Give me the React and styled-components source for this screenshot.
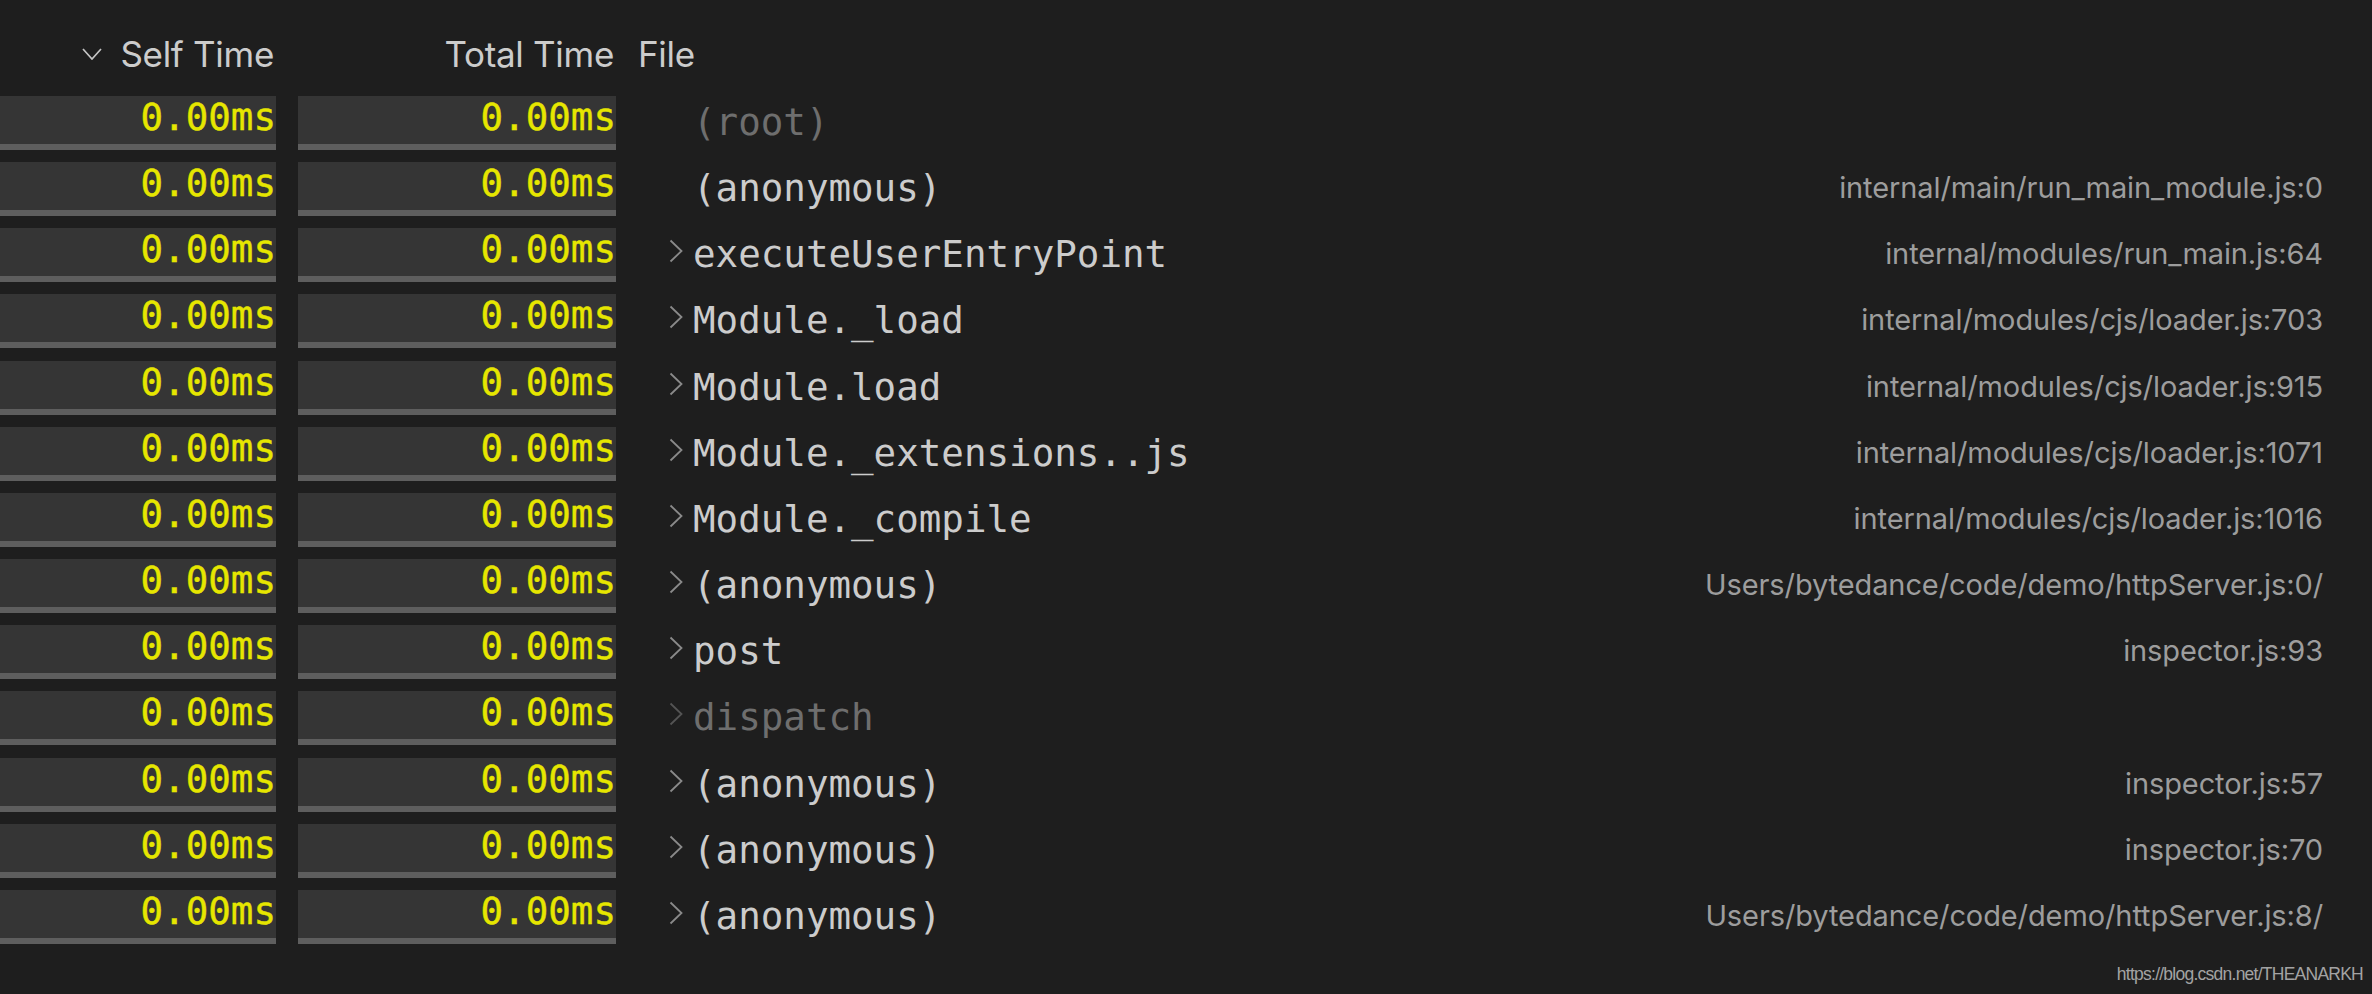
import React from "react";
import styled, { createGlobalStyle } from "styled-components";

const rows = [
  { name: "(root)", dim: true, leaf: true, file: "" },
  { name: "(anonymous)", leaf: true, file: "internal/main/run_main_module.js:0" },
  { name: "executeUserEntryPoint", file: "internal/modules/run_main.js:64" },
  { name: "Module._load", file: "internal/modules/cjs/loader.js:703" },
  { name: "Module.load", file: "internal/modules/cjs/loader.js:915" },
  { name: "Module._extensions..js", file: "internal/modules/cjs/loader.js:1071" },
  { name: "Module._compile", file: "internal/modules/cjs/loader.js:1016" },
  { name: "(anonymous)", file: "Users/bytedance/code/demo/httpServer.js:0/" },
  { name: "post", file: "inspector.js:93" },
  { name: "dispatch", dim: true, file: "" },
  { name: "(anonymous)", file: "inspector.js:57" },
  { name: "(anonymous)", file: "inspector.js:70" },
  { name: "(anonymous)", file: "Users/bytedance/code/demo/httpServer.js:8/" },
];

const GlobalStyle = createGlobalStyle`
  html, body {
    margin: 0;
    padding: 0;
    background: #1e1e1e;
    overflow: hidden;
  }
`;

const Chevron = ({ dim }) => (
  <ChevronBox>
    <svg width="14" height="24" viewBox="0 0 14 24">
      <polyline
        points="1.5,1.5 12.5,12 1.5,22.5"
        fill="none"
        stroke={dim ? "#545454" : "#8a8a8a"}
        strokeWidth="1.8"
      />
    </svg>
  </ChevronBox>
);

const SortIcon = () => (
  <svg width="20" height="12" viewBox="0 0 20 12">
    <polyline
      points="1,1 10,11 19,1"
      fill="none"
      stroke="#c5c5c5"
      strokeWidth="1.7"
    />
  </svg>
);

const App = () => {
  return (
    <Page>
      <GlobalStyle />
      <Header>
        <HeadCell>
          <SortIcon />
          <HeadLabel>Self Time</HeadLabel>
        </HeadCell>
        <HeadCell>
          <HeadLabel>Total Time</HeadLabel>
        </HeadCell>
        <HeadCell $left>
          <HeadLabel>File</HeadLabel>
        </HeadCell>
        <span />
      </Header>

      <Table>
        {rows.map((row, i) => (
          <Row key={i}>
            <TimeBar>
              <TimeValue>0.00ms</TimeValue>
            </TimeBar>
            <TimeBar>
              <TimeValue>0.00ms</TimeValue>
            </TimeBar>
            <NameCell>
              {row.leaf ? <ChevronSpacer /> : <Chevron dim={row.dim} />}
              <FnName $dim={row.dim}>{row.name}</FnName>
            </NameCell>
            <FilePath>{row.file}</FilePath>
          </Row>
        ))}
      </Table>

      <Watermark>https://blog.csdn.net/THEANARKH</Watermark>
    </Page>
  );
};

const Page = styled.div`
  width: 2372px;
  height: 994px;
  background: #1e1e1e;
`;

const Columns = styled.div`
  display: grid;
  grid-template-columns: 276px 318px 1fr auto;
  column-gap: 22px;
`;

const Header = styled(Columns)`
  height: 96px;
  box-sizing: border-box;
  padding-top: 36px;
`;

const HeadCell = styled.div`
  display: flex;
  align-items: center;
  justify-content: ${({ $left }) => ($left ? "flex-start" : "flex-end")};
  gap: 18px;
  padding-right: 2px;
  height: 36px;
`;

const HeadLabel = styled.span`
  font-family: Inter, "Liberation Sans", sans-serif;
  font-size: 35px;
  line-height: 36px;
  color: #cccccc;
  letter-spacing: -0.3px;
`;

const Table = styled.div`
  display: flex;
  flex-direction: column;
  gap: 12.17px;
`;

const Row = styled(Columns)`
  height: 54px;
`;

const TimeBar = styled.div`
  height: 48px;
  background: #353535;
  border-bottom: 6px solid #5e5e5e;
  display: flex;
  justify-content: flex-end;
`;

const TimeValue = styled.span`
  font-family: "DejaVu Sans Mono", "Liberation Mono", monospace;
  font-size: 37.5px;
  line-height: 42px;
  color: #e6e600;
  -webkit-text-stroke: 0.4px #e6e600;
`;

const NameCell = styled.div`
  display: flex;
  align-items: flex-start;
  padding-left: 31px;
`;

const ChevronBox = styled.div`
  width: 14px;
  margin-top: 11px;
  margin-right: 10px;
  display: flex;
`;

const ChevronSpacer = styled.div`
  width: 24px;
`;

const FnName = styled.span`
  font-family: "DejaVu Sans Mono", "Liberation Mono", monospace;
  font-size: 37.5px;
  line-height: 53px;
  color: ${({ $dim }) => ($dim ? "#6e6e6e" : "#cccccc")};
  white-space: nowrap;
`;

const FilePath = styled.span`
  font-family: Inter, "Liberation Sans", sans-serif;
  font-size: 29px;
  line-height: 52px;
  letter-spacing: -0.1px;
  color: #9d9d9d;
  text-align: right;
  padding-right: 49px;
  white-space: nowrap;
`;

const Watermark = styled.div`
  margin-top: 20px;
  padding-right: 9px;
  text-align: right;
  font-family: "Liberation Sans", Arial, sans-serif;
  font-size: 17.5px;
  line-height: 20px;
  letter-spacing: -0.75px;
  color: #a3a3a3;
`;

export default App;
